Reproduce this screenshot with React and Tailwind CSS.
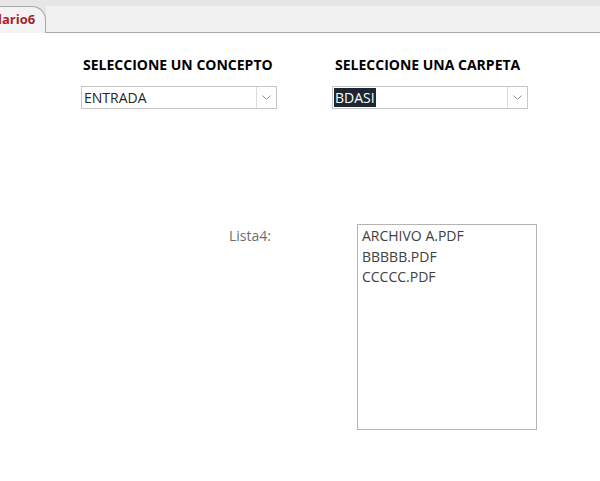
import React from "react";

const font = { fontFamily: '"Open Sans", "Noto Sans", sans-serif' };

function Combo({ value, highlighted }) {
  return (
    <div className="flex h-[23px] w-[196px] border border-[#c6c6c6] bg-white">
      <div className="flex flex-1 items-center pl-[1px]">
        {highlighted ? (
          <span className="bg-[#1c2733] px-[1px] text-[14px] leading-[19px] text-white">{value}</span>
        ) : (
          <span className="pl-[1px] text-[14px] leading-[19px] text-[#262626]">{value}</span>
        )}
      </div>
      <div className="flex w-[20px] items-center justify-center border-l border-[#dcdcdc]">
        <svg width="9" height="6" viewBox="0 0 9 6">
          <path d="M0.5 0.5 L4.5 4.5 L8.5 0.5" fill="none" stroke="#8a8a8a" strokeWidth="1" />
        </svg>
      </div>
    </div>
  );
}

export default function App() {
  return (
    <div className="h-[481px] w-[600px] overflow-hidden bg-white" style={font}>
      {/*Barra de pestañas*/}
      <div className="flex h-[33px] bg-[#e6e6e6]">
        <div className="mt-[6px] flex h-[27px] w-[46px] items-center rounded-tr-[14px] border-r border-t border-[#a8a8a8] bg-[#f3f3f3] pb-[1px]">
          <span className="-ml-[2px] text-[13px] font-bold text-[#a4262c]">lario6</span>
        </div>
        <div className="mt-[6px] flex-1 border-b border-[#a8a8a8] bg-[#f1f1f1]"></div>
      </div>

      {/*Combos*/}
      <div className="mt-[22px] flex">
        <div className="ml-[81px] flex flex-col">
          <span className="pl-[2px] text-[14px] font-bold leading-[20px] text-black">SELECCIONE UN CONCEPTO</span>
          <div className="mt-[11px]">
            <Combo value="ENTRADA" />
          </div>
        </div>
        <div className="ml-[55px] flex flex-col">
          <span className="pl-[3px] text-[14px] font-bold leading-[20px] text-black">SELECCIONE UNA CARPETA</span>
          <div className="mt-[11px]">
            <Combo value="BDASI" highlighted />
          </div>
        </div>
      </div>

      {/*Lista*/}
      <div className="mt-[115px] flex">
        <span className="ml-[229px] mt-[2px] text-[14px] leading-[20px] text-[#6e6e6e]">Lista4:</span>
        <div className="ml-[86px] flex h-[206px] w-[180px] flex-col border border-[#b4b4b4] bg-white pl-[4px] pt-[1px]">
          {["ARCHIVO A.PDF", "BBBBB.PDF", "CCCCC.PDF"].map((item) => (
            <span key={item} className="text-[14px] leading-[20.5px] text-[#404040]">
              {item}
            </span>
          ))}
        </div>
      </div>
    </div>
  );
}
